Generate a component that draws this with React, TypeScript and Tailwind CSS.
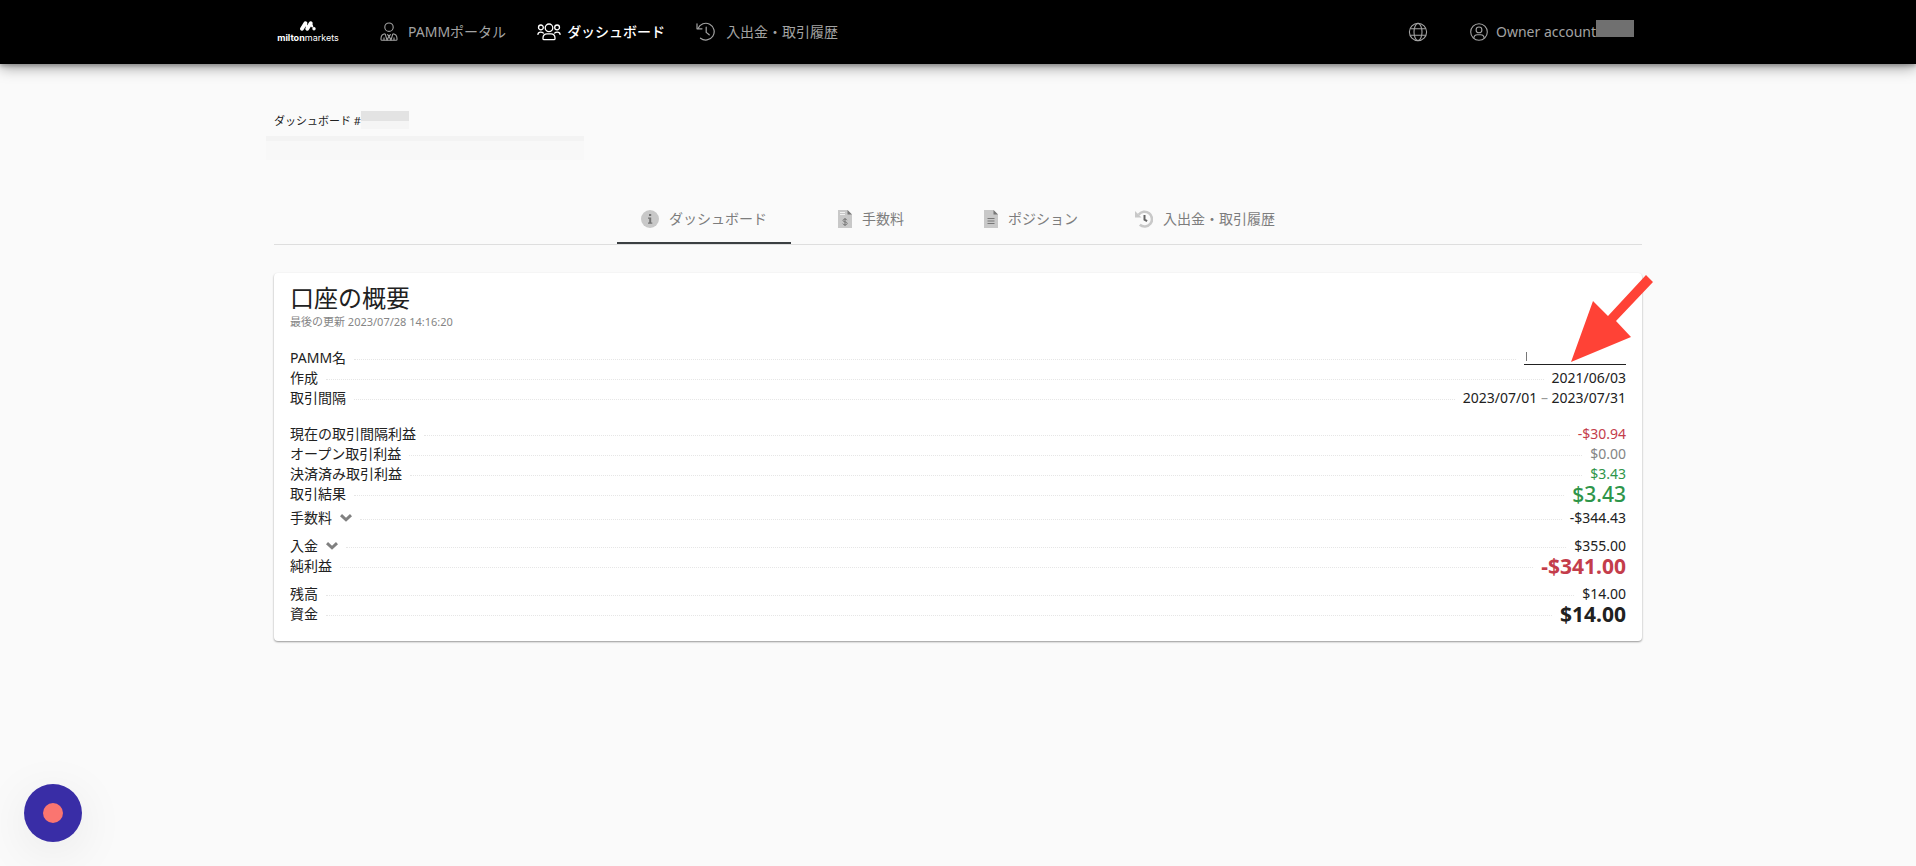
import type { ReactNode } from 'react'

type Tone = 'default' | 'muted' | 'red' | 'green'
type Size = 'sm' | 'lg' | 'xl'

interface Row {
  label: string
  value: string
  tone?: Tone
  size?: Size
  expandable?: boolean
}

const toneClass: Record<Tone, string> = {
  default: 'text-[#212121]',
  muted: 'text-[#858585]',
  red: 'text-[#c43d4b]',
  green: 'text-[#2e9549]',
}

const sizeClass: Record<Size, string> = {
  sm: 'text-sm',
  lg: 'text-[21px] font-medium',
  xl: 'text-[21px] font-bold',
}

const resultRows: Row[] = [
  { label: '現在の取引間隔利益', value: '-$30.94', tone: 'red' },
  { label: 'オープン取引利益', value: '$0.00', tone: 'muted' },
  { label: '決済済み取引利益', value: '$3.43', tone: 'green' },
  { label: '取引結果', value: '$3.43', tone: 'green', size: 'lg' },
]

const feeRows: Row[] = [{ label: '手数料', value: '-$344.43', expandable: true }]

const depositRows: Row[] = [
  { label: '入金', value: '$355.00', expandable: true },
  { label: '純利益', value: '-$341.00', tone: 'red', size: 'xl' },
]

const balanceRows: Row[] = [
  { label: '残高', value: '$14.00' },
  { label: '資金', value: '$14.00', size: 'xl' },
]

function Logo() {
  return (
    <a href="#" className="flex w-16 flex-col items-center text-white">
      <svg width="16" height="10" viewBox="0 0 16 10" fill="none" stroke="currentColor" strokeLinecap="round">
        <path d="M2 7.8 5.4 2.2M7.3 7.8 10.7 2.2" strokeWidth="3.8" />
        <path d="M5.4 2.2 7.3 7.4M10.7 2.2 12.2 5.4" strokeWidth="2.2" />
        <circle cx="14" cy="7.8" r="1.1" fill="currentColor" strokeWidth="1.2" />
      </svg>
      <span className="mt-px font-['Inter',sans-serif] text-[9px] leading-3">
        <b>milton</b>markets
      </span>
    </a>
  )
}

function PersonIcon() {
  return (
    <svg width="18" height="20" viewBox="0 0 18 20" fill="none" stroke="currentColor" strokeWidth="1.1" strokeLinejoin="round">
      <circle cx="9" cy="5.2" r="4.2" />
      <path d="M5.2 11.8C2.4 12.2 1 13.8 1 16.4v1q0 .9.9.9h14.2q.9 0 .9-.9v-1c0-2.6-1.4-4.2-4.2-4.6" />
      <path d="M5.2 11.8 7 18.2 9 14l2 4.2 1.8-6.4M7.2 12.3 9 14l1.8-1.7M4 15.6v2.6M14 15.6v2.6" />
    </svg>
  )
}

function PeopleIcon() {
  return (
    <svg width="24" height="18" viewBox="0 0 24 18" fill="none" stroke="currentColor" strokeWidth="1.3" strokeLinecap="round">
      <circle cx="12" cy="4.8" r="3.8" />
      <circle cx="3.9" cy="4.4" r="2.4" />
      <circle cx="20.1" cy="4.4" r="2.4" />
      <path d="M7 16.7q-1 0-1-1V15c0-2.6 1.7-4.2 4-4.2h4c2.3 0 4 1.6 4 4.2v.7q0 1-1 1Z" />
      <path d="M.9 11.4c.2-1.5 1.2-2.3 2.7-2.3 1.3 0 2.2.3 2.8 1M23.1 11.4c-.2-1.5-1.2-2.3-2.7-2.3-1.3 0-2.2.3-2.8 1" />
    </svg>
  )
}

function HistoryIcon() {
  return (
    <svg width="20" height="20" viewBox="0 0 20 20" fill="none" stroke="currentColor" strokeWidth="1.2" strokeLinecap="round" strokeLinejoin="round">
      <path d="M2 6.5A8.4 8.4 0 1 1 4.5 16.2" />
      <path d="M1 1.8v5h5" />
      <path d="M10.2 5.2v5.2l3 2.4" />
    </svg>
  )
}

function GlobeIcon() {
  return (
    <svg width="20" height="20" viewBox="0 0 20 20" fill="none" stroke="currentColor" strokeWidth="1.1">
      <circle cx="10" cy="10" r="8.6" />
      <ellipse cx="10" cy="10" rx="4" ry="8.6" />
      <path d="M2.2 6.7h15.6M2.2 13.3h15.6" />
    </svg>
  )
}

function AccountIcon() {
  return (
    <svg width="18" height="18" viewBox="0 0 18 18" fill="none" stroke="currentColor" strokeWidth="1.1">
      <circle cx="9" cy="9" r="8.3" />
      <circle cx="9" cy="6.9" r="2.9" />
      <path d="M3.8 15.3c.2-2.4 1.6-3.5 3.5-3.5h3.4c1.9 0 3.3 1.1 3.5 3.5" />
    </svg>
  )
}

function InfoIcon() {
  return (
    <svg width="18" height="18" viewBox="0 0 18 18">
      <circle cx="9" cy="9" r="9" fill="#c8c8c8" />
      <path d="M8 4h2.2v2H8zM7 7.4h3.2v5H11.3v1.4H7v-1.4h1.2V8.8H7z" fill="#737373" />
    </svg>
  )
}

function SheetIcon({ children }: { children: ReactNode }) {
  return (
    <svg width="14" height="18" viewBox="0 0 14 18" fill="none">
      <path d="M0 0h9.5L14 4.5V18H0z" fill="#c8c8c8" />
      <path d="M9.5 0 14 4.5H9.5z" fill="#777" />
      {children}
    </svg>
  )
}

function FeeIcon() {
  return (
    <SheetIcon>
      <path d="M2 2.5h5M2 4.5h5" stroke="#f0f0f0" />
      <path d="M9 10.2c-.3-.8-1-1.1-2-1.1-1.2 0-2 .5-2 1.4 0 2 4.2.8 4.2 2.9 0 1-.9 1.5-2.2 1.5-1.1 0-1.9-.4-2.2-1.3M7 8v8" stroke="#777" />
    </SheetIcon>
  )
}

function PositionIcon() {
  return (
    <SheetIcon>
      <path d="M3.5 8.5h7M3.5 11h7M3.5 13.5h7" stroke="#777" />
    </SheetIcon>
  )
}

function HistoryBoldIcon() {
  return (
    <svg width="18" height="18" viewBox="0 0 18 18" fill="none">
      <path d="M3.6 4.8A7.4 7.4 0 1 1 4.8 14.8" stroke="#c8c8c8" strokeWidth="2.6" />
      <path d="M0 1v6.5H6.5z" fill="#c8c8c8" />
      <path d="M9.5 5v4.6l2.6 1.6" stroke="#666" strokeWidth="2" />
    </svg>
  )
}

function Chevron() {
  return (
    <svg width="12" height="8" viewBox="0 0 12 8" fill="none" aria-hidden="true">
      <path d="M1 1.2 6 5.8l5-4.6" stroke="#808080" strokeWidth="3" />
    </svg>
  )
}

function NavLink({ icon, label, active }: { icon: ReactNode; label: string; active?: boolean }) {
  return (
    <a
      href="#"
      aria-current={active ? 'page' : undefined}
      className={`flex items-center whitespace-nowrap ${active ? 'gap-1.5 font-medium text-white' : 'gap-2.5 text-[#a3a3a3]'}`}
    >
      {icon}
      <span>{label}</span>
    </a>
  )
}

function Header() {
  return (
    <header className="relative bg-black text-sm leading-5 shadow-[0_2px_4px_rgba(0,0,0,0.25),0_3px_14px_rgba(0,0,0,0.4)]">
      <div className="mx-auto flex h-16 max-w-[1368px] items-center">
        <div className="ml-0.5">
          <Logo />
        </div>
        <nav className="ml-10 flex items-center gap-[31px]">
          <NavLink icon={<PersonIcon />} label="PAMMポータル" />
          <NavLink icon={<PeopleIcon />} label="ダッシュボード" active />
          <NavLink icon={<HistoryIcon />} label="入出金・取引履歴" />
        </nav>
        <div className="mr-2 ml-auto flex items-center text-[#a3a3a3]">
          <button type="button" aria-label="言語" className="mr-[42px]">
            <GlobeIcon />
          </button>
          <button type="button" className="flex items-center">
            <AccountIcon />
            <span className="ml-2 whitespace-nowrap">Owner account</span>
            <span className="-mt-2 h-[17px] w-[38px] bg-[#707070]" />
          </button>
        </div>
      </div>
    </header>
  )
}

function Tab({ icon, label, active }: { icon: ReactNode; label: string; active?: boolean }) {
  return (
    <button
      type="button"
      role="tab"
      aria-selected={!!active}
      className={`flex h-12 min-w-40 items-center justify-center gap-2.5 border-b-2 px-6 ${active ? 'border-[#3b3f42]' : 'border-transparent'}`}
    >
      {icon}
      <span className="whitespace-nowrap">{label}</span>
    </button>
  )
}

function Leader() {
  return <span className="mx-2 mt-0.5 flex-1 border-t border-dotted border-[#e6e6e6]" />
}

function SummaryRow({ label, value, tone = 'default', size = 'sm', expandable }: Row) {
  return (
    <div className="flex h-5 items-center">
      <dt className="leading-5">
        {expandable ? (
          <button type="button" className="flex items-center gap-2">
            {label}
            <Chevron />
          </button>
        ) : (
          label
        )}
      </dt>
      <Leader />
      <dd className={`leading-5 ${sizeClass[size]} ${toneClass[tone]}`}>{value}</dd>
    </div>
  )
}

function RowGroup({ rows, className }: { rows: Row[]; className: string }) {
  return (
    <dl className={className}>
      {rows.map(row => (
        <SummaryRow key={row.label} {...row} />
      ))}
    </dl>
  )
}

function Arrow() {
  return (
    <svg className="absolute top-0.5 -right-[11px]" width="82" height="87" viewBox="0 0 82 87" aria-hidden="true">
      <path d="M0 87 22 26l15 15L75 0l7 7-37 39 15 16z" fill="#ff4236" />
    </svg>
  )
}

function AccountSummary() {
  return (
    <section className="relative mt-7 rounded bg-white px-4 pt-[11px] pb-[17px] text-sm leading-5 shadow-[0_1px_2px_rgba(0,0,0,0.4)]">
      <h1 className="text-2xl leading-7">口座の概要</h1>
      <p className="mt-0.5 text-[11px] leading-4 text-[#858585]">最後の更新 2023/07/28 14:16:20</p>

      <dl className="mt-[18px]">
        <div className="flex h-5 items-center">
          <dt>PAMM名</dt>
          <Leader />
          <dd className="self-start">
            <a href="#" aria-label="PAMM名" className="flex h-[17px] w-[102px] items-center border-b border-[#212121] pl-0.5">
              <span className="h-[9px] w-px bg-[#777]" />
            </a>
          </dd>
        </div>
        <SummaryRow label="作成" value="2021/06/03" />
        <div className="flex h-5 items-center">
          <dt>取引間隔</dt>
          <Leader />
          <dd>
            2023/07/01 <span className="text-[#999]">–</span> 2023/07/31
          </dd>
        </div>
      </dl>

      <RowGroup rows={resultRows} className="mt-4" />
      <RowGroup rows={feeRows} className="mt-1" />
      <RowGroup rows={depositRows} className="mt-2" />
      <RowGroup rows={balanceRows} className="mt-2" />

      <Arrow />
    </section>
  )
}

export default function App() {
  return (
    <div lang="ja" className="min-h-screen bg-[#fafafa] font-['Noto_Sans','Noto_Sans_CJK_JP',sans-serif] text-[#212121]">
      <Header />

      <main className="mx-auto max-w-[1368px] pt-12">
        <div className="flex h-4 items-start text-[11px] leading-4">
          <span className="mt-px">ダッシュボード #</span>
          <span className="-mt-px h-[18px] w-12 border-b-8 border-[#f5f5f5] bg-[#e3e3e3]" />
        </div>
        {/* Masked account name */}
        <div className="mt-2 -ml-2 h-6 w-[318px] border-t-[5px] border-[#f3f3f3] bg-[#f8f8f8]" />

        <div role="tablist" className="mt-9 flex justify-center border-b border-[#dedede] text-sm leading-5 text-[#7d7d7d]">
          <Tab icon={<InfoIcon />} label="ダッシュボード" active />
          <Tab icon={<FeeIcon />} label="手数料" />
          <Tab icon={<PositionIcon />} label="ポジション" />
          <Tab icon={<HistoryBoldIcon />} label="入出金・取引履歴" />
        </div>

        <AccountSummary />
      </main>

      <button
        type="button"
        aria-label="録画"
        className="fixed bottom-6 left-6 flex size-[58px] items-center justify-center rounded-full bg-[#392da6] shadow-[0_10px_50px_rgba(0,0,0,0.08)]"
      >
        <span className="size-5 rounded-full bg-[#fa7570]" />
      </button>
    </div>
  )
}
